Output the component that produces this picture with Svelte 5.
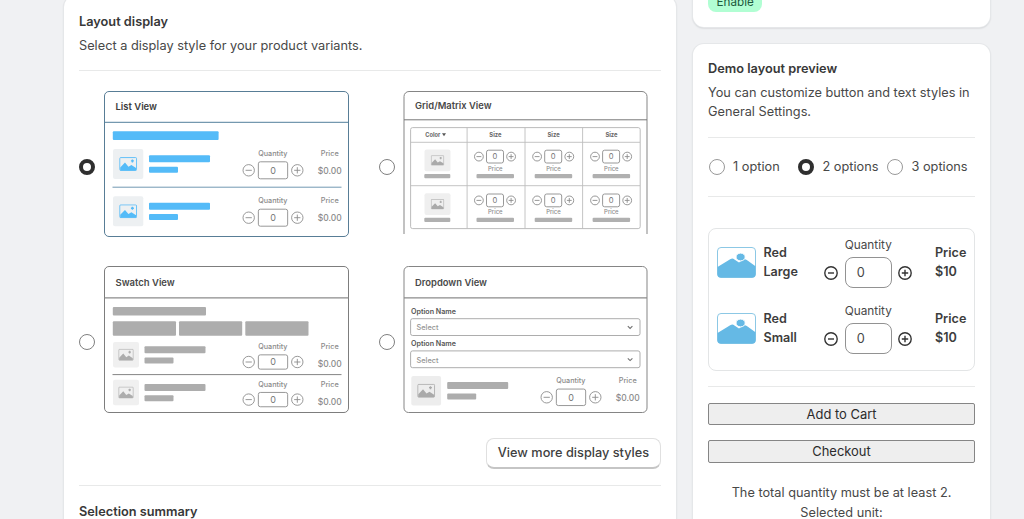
<script>
  let layout = $state('list');
  let count = $state(2);
  const variants = ['Large', 'Small'];
  const gridCols = [0, 58.2, 116.1];
  const gridRows = [0, 43.8];
</script>

{#snippet picture(x, y, w, h, iw, color, bg)}
  <rect {x} {y} width={w} height={h} rx="2" fill={bg} />
  <svg x={x + (w - iw) / 2} y={y + (h - iw * 0.77) / 2} width={iw} height={iw * 0.77} viewBox="0 0 18 14">
    <rect x=".5" y=".5" width="17" height="13" rx="1" fill="none" stroke={color} stroke-width=".9" />
    <path d="M1 10.5 5.8 5.6 9.3 9.8 12.3 8 17 11V13.5H1Z" fill={color} />
    <path d="M13.3 2.4V5.4M11.8 3.9H14.8" stroke={color} stroke-width="1.4" />
  </svg>
{/snippet}

{#snippet label(x, y, w, size, text, color, weight)}
  <text {x} {y} font-size={size} textLength={w} lengthAdjust="spacingAndGlyphs" fill={color} font-weight={weight}>{text}</text>
{/snippet}

{#snippet stepper(cx, cy, gap, r, bw, bh, size)}
  <g fill="none" stroke="#8c8c8c" stroke-width=".9">
    <circle cx={cx - gap} {cy} {r} />
    <circle cx={cx + gap} {cy} {r} />
    <rect x={cx - bw / 2} y={cy - bh / 2} width={bw} height={bh} rx="2" />
    <path d="M{cx - gap - r * 0.55} {cy}h{r * 1.1}M{cx + gap - r * 0.55} {cy}h{r * 1.1}M{cx + gap} {cy - r * 0.55}v{r * 1.1}" />
  </g>
  <text x={cx} y={cy + size * 0.36} font-size={size} text-anchor="middle" fill="#777">0</text>
{/snippet}

{#snippet purchase(cx, top, mid, price, bh)}
  {@render label(cx - 14.8, top + 0.3, 29.3, 7, 'Quantity', '#8a8a8a', 500)}
  {@render label(cx + 47.7, top + 0.3, 18, 7, 'Price', '#8a8a8a', 500)}
  {@render stepper(cx, mid, 24.3, 5.7, 29.3, bh, 9)}
  {@render label(cx + 44.7, price, 24, 8.6, '$0.00', '#8a8a8a', 500)}
{/snippet}

{#snippet bars(x, y, color, gap)}
  <rect {x} {y} width="61" height="7" rx="1" fill={color} />
  <rect {x} y={y + gap} width="29" height="6" rx="1" fill={color} />
{/snippet}

{#snippet radio(value)}
  <input type="radio" name="layout" {value} aria-label={value} bind:group={layout} />
{/snippet}

<div class="page">
  <section class="card main">
    <h2>Layout display</h2>
    <p class="desc">Select a display style for your product variants.</p>
    <hr />
    <div class="layouts">
      <label>
        {@render radio('list')}
        <svg width="245" height="146" viewBox="104 91 245 146">
          <rect x="104.5" y="91.5" width="244" height="145" rx="4.5" fill="#fff" stroke="#587d96" />
          <path d="M104.5 122.3H348.5" stroke="#527f9c" />
          {@render label(115.5, 109.9, 41.5, 9.4, 'List View', '#3c3c3c', 600)}
          <rect x="112.8" y="131.3" width="105.8" height="8.6" rx="1" fill="#54bbf8" />
          {@render picture(113, 149, 30.3, 30, 18, '#54bbf8', '#edf0f2')}
          {@render bars(149, 155.2, '#54bbf8', 11.5)}
          {@render purchase(273, 155.4, 170.3, 173.8, 17)}
          <path d="M112.5 187.2H341.5" stroke="#7198b2" />
          {@render picture(113, 196.3, 30.3, 30, 18, '#54bbf8', '#edf0f2')}
          {@render bars(149, 202.8, '#54bbf8', 11.3)}
          {@render purchase(273, 203, 217.7, 221.4, 17)}
        </svg>
      </label>
      <label>
        {@render radio('grid')}
        <svg width="245" height="146" viewBox="403 91 245 146">
          <path d="M404 234V96.5A5 5 0 0 1 409 91.5H642A5 5 0 0 1 647 96.5V234" fill="none" stroke="#858585" />
          <path d="M404 119.8H647" stroke="#777" />
          {@render label(415, 108.6, 76.5, 9.4, 'Grid/Matrix View', '#484848', 600)}
          <rect x="410.6" y="127.6" width="229.6" height="101" rx="2" fill="none" stroke="#b4b4b4" stroke-width=".9" />
          <path d="M410.6 142.3H640M410.6 185.7H640M467.1 127.6V228.6M525 127.6V228.6M582.6 127.6V228.6" stroke="#bdbdbd" stroke-width=".9" />
          {@render label(425.3, 136.8, 15, 6, 'Color', '#666', 700)}
          <path d="M442 133.2h4l-2 3z" fill="#555" />
          {#each gridCols as dx}
            {@render label(489.3 + dx, 136.8, 12.2, 6, 'Size', '#666', 700)}
          {/each}
          {#each gridRows as dy}
            {@render picture(424.5, 149.5 + dy, 26, 21.8, 13.5, '#aaa', '#efefef')}
            <rect x="424.3" y={174 + dy} width="26" height="4.2" rx="1" fill="#b0b0b0" />
            {#each gridCols as dx}
              {@render stepper(495 + dx, 156.6 + dy, 16.1, 4.4, 17, 12.8, 7.6)}
              {@render label(488 + dx, 170.6 + dy, 14.5, 5.8, 'Price', '#8b8b8b', 500)}
              <rect x={476.5 + dx} y={174 + dy} width="37.5" height="4.2" rx="1" fill="#b0b0b0" />
            {/each}
          {/each}
        </svg>
      </label>
      <label>
        {@render radio('swatch')}
        <svg width="245" height="147" viewBox="104 266 245 147">
          <rect x="104.5" y="266.5" width="244" height="146" rx="4.5" fill="#fff" stroke="#7d7d7d" />
          <path d="M104.5 297.8H348.5" stroke="#8b8b8b" stroke-width="1.2" />
          {@render label(115.5, 285.5, 59.3, 9.4, 'Swatch View', '#484848', 600)}
          <rect x="112.8" y="307" width="93.2" height="8.5" rx="1" fill="#adadad" />
          <rect x="112.8" y="321.3" width="63.2" height="14.4" rx="1" fill="#adadad" />
          <rect x="179" y="321.3" width="63.2" height="14.4" rx="1" fill="#adadad" />
          <rect x="245.3" y="321.3" width="63.2" height="14.4" rx="1" fill="#adadad" />
          {@render picture(113, 342, 26, 25.5, 15.5, '#adadad', '#f0f0f0')}
          {@render bars(144.5, 346.2, '#adadad', 11.3)}
          {@render purchase(273, 348.5, 362, 366.8, 14.3)}
          <path d="M112.5 374.6H341.5" stroke="#858585" />
          {@render picture(113, 379.8, 26, 25.5, 15.5, '#adadad', '#f0f0f0')}
          {@render bars(144.5, 384, '#adadad', 11.2)}
          {@render purchase(273, 386.3, 399.6, 404.5, 14.3)}
        </svg>
      </label>
      <label>
        {@render radio('dropdown')}
        <svg width="245" height="147" viewBox="403 266 245 147">
          <rect x="404" y="266.5" width="243" height="146" rx="4.5" fill="#fff" stroke="#858585" />
          <path d="M404 297.8H647" stroke="#8b8b8b" stroke-width="1.2" />
          {@render label(415, 285.5, 72, 9.4, 'Dropdown View', '#484848', 600)}
          {#each [0, 32.2] as dy}
            {@render label(411, 313.8 + dy, 45, 7.2, 'Option Name', '#555', 600)}
            <rect x="410.6" y={318.7 + dy} width="229.4" height="16.8" rx="2" fill="none" stroke="#a4a4a4" stroke-width=".9" />
            {@render label(416.5, 330.3 + dy, 22, 7.2, 'Select', '#949494', 500)}
            <path d="M627.8 {326.2 + dy}l2.3 2.2 2.3-2.2" fill="none" stroke="#707070" stroke-width="1.1" />
          {/each}
          {@render picture(411.3, 376, 29.8, 29.5, 18, '#aaa', '#ededed')}
          {@render bars(447.2, 382, '#adadad', 11.6)}
          {@render purchase(571, 382.4, 397.3, 400.9, 16.5)}
        </svg>
      </label>
    </div>
    <div class="more"><button>View more display styles</button></div>
    <hr />
    <h2 class="summary">Selection summary</h2>
  </section>

  <aside>
    <section class="card status"><span class="badge">Enable</span></section>
    <section class="card demo">
      <h2>Demo layout preview</h2>
      <p class="intro">You can customize button and text styles in General Settings.</p>
      <hr />
      <div class="counts">
        <label><input type="radio" name="count" value={1} bind:group={count} />1 option</label>
        <label><input type="radio" name="count" value={2} bind:group={count} />2 options</label>
        <label><input type="radio" name="count" value={3} bind:group={count} />3 options</label>
      </div>
      <hr />
      <div class="preview">
        {#each variants as size}
          <div class="variant">
            <svg class="thumb" width="39" height="31" viewBox="0 0 39 31">
              <rect x=".5" y=".5" width="38" height="30" rx="3.5" fill="#fff" stroke="#8cc8e5" />
              <path d="M.5 20 13.6 12.1Q15.5 11 17.4 12.4L22 15.6 26.3 12.6Q28 11.6 29.8 12.9L38.5 19.2V27.5A3 3 0 0 1 35.5 30.5H3.5A3 3 0 0 1 .5 27.5Z" fill="#65b9e5" />
              <ellipse cx="23.6" cy="10" rx="4.6" ry="3.9" fill="#65b9e5" stroke="#fff" stroke-width="1" />
            </svg>
            <div class="name">Red<br />{size}</div>
            <div class="quantity">
              <span>Quantity</span>
              <div class="controls">
                <svg width="14" height="14" viewBox="0 0 14 14"><circle cx="7" cy="7" r="6.2" /><path d="M4 7h6" /></svg>
                <div class="box">0</div>
                <svg width="14" height="14" viewBox="0 0 14 14"><circle cx="7" cy="7" r="6.2" /><path d="M3.8 7h6.4M7 3.8v6.4" /></svg>
              </div>
            </div>
            <div class="price">Price<br />$10</div>
          </div>
        {/each}
      </div>
      <hr />
      <button class="cart">Add to Cart</button>
      <button class="checkout">Checkout</button>
      <p class="note">The total quantity must be at least 2.<br />Selected unit:</p>
    </section>
  </aside>
</div>

<style>
  :global(body) { background: #f0f1f3; }
  .page {
    display: flex;
    gap: 17px;
    width: 1024px;
    height: 519px;
    padding-left: 64px;
    box-sizing: border-box;
    overflow: hidden;
    font: 400 12.75px/20px Inter, sans-serif;
    color: #484848;
  }
  h2, p { margin: 0; font-size: 12.75px; line-height: 20px; }
  h2 { font-weight: 600; color: #383838; }
  hr { width: 100%; height: 1px; margin: 0; border: 0; background: #e8e9e9; flex: none; }
  .card {
    display: flex;
    flex-direction: column;
    box-sizing: border-box;
    background: #fff;
    box-shadow: 0 0 0 1px #e5e7e9, 0 1px 2px #b5b8bb;
    flex: none;
  }
  .main { width: 612px; height: 560px; margin-top: -4px; padding: 16px 15px 0; border-radius: 11px; }
  .desc { margin: 4px 0 14px; }
  .layouts {
    display: grid;
    grid-template-columns: 270px 269px;
    grid-template-rows: 146px 147px;
    gap: 29px 30px;
    margin-top: 20px;
  }
  .layouts label { display: flex; align-items: center; gap: 9px; }
  .layouts label:nth-child(even) { gap: 8px; }
  .layouts svg { display: block; flex: none; font-family: Inter, sans-serif; }
  input {
    appearance: none;
    box-sizing: border-box;
    width: 16px;
    height: 16px;
    margin: 0;
    border: 1px solid #808080;
    border-radius: 50%;
    background: #fff;
    flex: none;
  }
  input:checked { border: 4.5px solid #2f2f2f; }
  .layouts input { position: relative; top: 3px; }
  .layouts label:nth-child(n + 3) input { top: 2px; }
  .more { display: flex; justify-content: flex-end; margin: 25px 0 16px; }
  .more button {
    width: 175px;
    height: 31px;
    padding: 0 0 1px;
    border: 1px solid #e0e0e0;
    border-bottom: 2px solid #c5c5c5;
    border-radius: 8px;
    background: #fff;
    color: #404040;
    font: 500 12.75px/20px Inter, sans-serif;
  }
  .summary { margin-top: 16px; }
  aside { width: 297px; flex: none; }
  .status { height: 47px; margin-top: -20px; padding: 12px 15px; border-radius: 11px; align-items: flex-start; }
  .badge {
    padding: 0 8.5px;
    border-radius: 8px;
    background: #b1fed3;
    color: #20583c;
    font-size: 11.7px;
  }
  .demo { height: 520px; margin-top: 17px; padding: 15px 15px 0; border-radius: 11px; }
  .intro { margin: 4px 0 16px; line-height: 19px; }
  .counts { display: grid; grid-template-columns: 89.5px 89px 1fr; height: 58px; align-items: center; padding-left: .5px; }
  .counts label { display: flex; align-items: center; gap: 8.5px; white-space: nowrap; }
  .counts input:not(:checked) { border-color: #999; }
  .preview {
    box-sizing: border-box;
    height: 143px;
    margin: 31px 0 15px;
    padding: 8px 7px 0 8px;
    border: 1px solid #e3e5e6;
    border-radius: 8px;
  }
  .variant { display: grid; grid-template-columns: 46.5px 60.5px 74px 1fr; height: 66.4px; }
  .thumb { margin-top: 10px; }
  .name, .price { font-size: 12.6px; font-weight: 600; line-height: 19.5px; color: #3d3d3d; margin-top: 5.5px; }
  .price { margin-left: 37px; }
  .quantity { display: flex; flex-direction: column; align-items: center; width: 88.5px; line-height: 17px; }
  .quantity span { font-size: 11.8px; }
  .controls { display: flex; align-items: center; gap: 6.5px; margin-top: 3px; }
  .controls svg { fill: none; stroke: #333; stroke-width: 1.4; }
  .box {
    box-sizing: border-box;
    width: 47px;
    height: 31px;
    padding-left: 11px;
    border: 1px solid #929292;
    border-radius: 8px;
    line-height: 29px;
  }
  .cart, .checkout {
    box-sizing: border-box;
    width: 100%;
    padding: 0;
    border: 1px solid #858585;
    border-radius: 2px;
    background: #eee;
    color: #2b2b2b;
    font: 400 12.95px/19px Inter, sans-serif;
    flex: none;
  }
  .cart { height: 22px; margin-top: 16px; }
  .checkout { height: 23px; margin-top: 15px; }
  .note { margin-top: 20px; text-align: center; line-height: 19.5px; }
</style>
